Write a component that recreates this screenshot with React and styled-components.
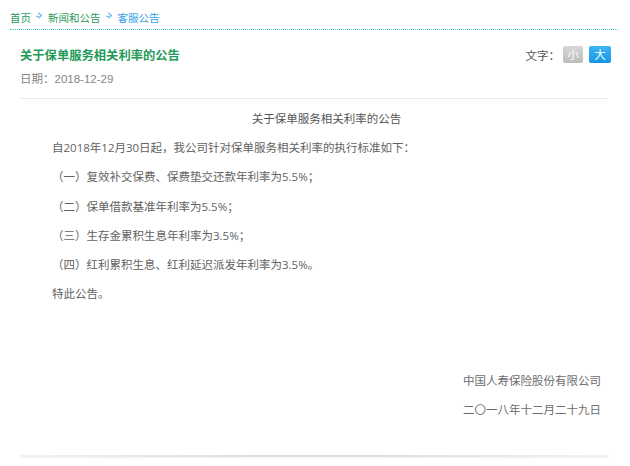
import React from "react";
import styled, { createGlobalStyle } from "styled-components";

const Global = createGlobalStyle`
  html, body { margin: 0; padding: 0; background: #fff; }
  body { font-family: "Noto Sans CJK SC", "Noto Sans", sans-serif; }
`;

const Page = styled.div`
  width: 630px;
  height: 466px;
  overflow: hidden;
  background: #fff;
`;

const Crumbs = styled.nav`
  margin: 0 12px 0 10px;
  padding-top: 7px;
  height: 22px;
  border-bottom: 1px dotted #38cfd4;
  display: flex;
  align-items: center;
  font-size: 10.5px;
  line-height: 16px;
`;

const Crumb = styled.a`
  color: ${(p) => (p.$current ? "#2f9fe6" : "#2b9a58")};
  text-decoration: none;
`;

const Sep = styled.svg`
  width: 6px;
  height: 7px;
  margin: -5px 6px 0 5px;
`;

const Header = styled.header`
  margin: 0 19px 0 20px;
  padding-top: 16px;
  display: flex;
  justify-content: space-between;
  align-items: flex-start;
`;

const TitleBlock = styled.div`
  display: flex;
  flex-direction: column;
  gap: 5px;
`;

const Title = styled.h1`
  margin: 0;
  font-size: 12.3px;
  line-height: 18px;
  font-weight: bold;
  color: #1f9a58;
`;

const DateLine = styled.div`
  font-size: 11.5px;
  line-height: 18px;
  color: #858585;
  span { font-family: "Liberation Sans", Arial, sans-serif; font-size: 11.5px; }
`;

const FontCtl = styled.div`
  display: flex;
  align-items: center;
  gap: 6px;
  font-size: 11.5px;
  color: #555;
`;

const Label = styled.span`
  margin-right: -3px;
`;

const SizeBtn = styled.button`
  width: ${(p) => (p.$active ? "22px" : "20px")};
  height: 17px;
  padding: 0;
  border: none;
  border-radius: 2px;
  font-family: "Noto Sans CJK SC", sans-serif;
  font-size: 11.5px;
  line-height: 17px;
  color: #fff;
  background: ${(p) =>
    p.$active
      ? "linear-gradient(#3fb5f5, #1496e6)"
      : "linear-gradient(#d6d6d6, #bdbdbd)"};
`;

const Divider = styled.hr`
  margin: 10px 22px 0 20px;
  border: none;
  border-top: 1px solid #e9e9e9;
  height: 0;
`;

const Article = styled.article`
  margin: 0 29px 0 52px;
  padding-top: 5px;
  color: #626262;
  font-size: 11.5px;
  line-height: 29.2px;
  font-family: "Open Sans", "Noto Sans CJK SC", sans-serif;
`;

const ArticleTitle = styled.div`
  text-align: center;
  color: #555;
  font-family: "Noto Sans CJK SC", sans-serif;
`;

const Para = styled.p`
  margin: 0;
`;

const Signature = styled.div`
  margin-top: 58px;
  text-align: right;
  line-height: 29px;
  color: #6c6c6c;
  font-family: "Noto Sans CJK SC", sans-serif;
`;

const Footer = styled.div`
  margin: 31px 22px 0 20px;
  height: 2px;
  background: linear-gradient(to right, #f2f2f2, #dedede 40%, #dedede 60%, #f2f2f2);
  box-shadow: 0 1px 2px rgba(0, 0, 0, 0.06);
`;

const Arrow = () => (
  <Sep viewBox="0 0 6 7">
    <path d="M2.2 0.6 L5.4 3.5 L2.2 6.4" fill="none" stroke="#5bb7e4" strokeWidth="1.1" />
    <path d="M0 4.3 H3" stroke="#5bb7e4" strokeWidth="1" />
  </Sep>
);

export default function App() {
  return (
    <Page>
      <Global />
      <Crumbs>
        <Crumb href="#">首页</Crumb>
        <Arrow />
        <Crumb href="#">新闻和公告</Crumb>
        <Arrow />
        <Crumb href="#" $current>客服公告</Crumb>
      </Crumbs>
      <Header>
        <TitleBlock>
          <Title>关于保单服务相关利率的公告</Title>
          <DateLine>
            日期：<span>2018-12-29</span>
          </DateLine>
        </TitleBlock>
        <FontCtl>
          <Label>文字：</Label>
          <SizeBtn>小</SizeBtn>
          <SizeBtn $active>大</SizeBtn>
        </FontCtl>
      </Header>
      <Divider />
      <Article>
        <ArticleTitle>关于保单服务相关利率的公告</ArticleTitle>
        <Para>自2018年12月30日起，我公司针对保单服务相关利率的执行标准如下：</Para>
        <Para>（一）复效补交保费、保费垫交还款年利率为5.5%；</Para>
        <Para>（二）保单借款基准年利率为5.5%；</Para>
        <Para>（三）生存金累积生息年利率为3.5%；</Para>
        <Para>（四）红利累积生息、红利延迟派发年利率为3.5%。</Para>
        <Para>特此公告。</Para>
        <Signature>
          <div>中国人寿保险股份有限公司</div>
          <div>二〇一八年十二月二十九日</div>
        </Signature>
      </Article>
      <Footer />
    </Page>
  );
}
